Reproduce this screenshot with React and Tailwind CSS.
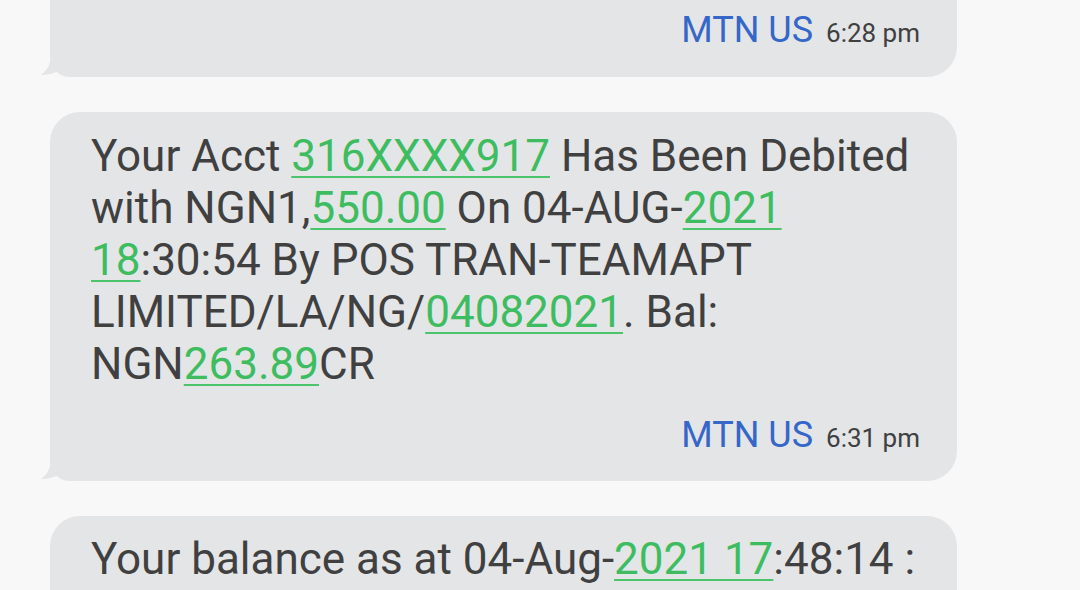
import React from 'react';

const Link = ({ children }) => (
  <span className="text-[#3dbd5f] underline decoration-[#4cc46c] decoration-2 underline-offset-[5px]">
    {children}
  </span>
);

const Tail = () => (
  <svg
    className="absolute left-[-10px] bottom-0"
    width="40"
    height="30"
    viewBox="0 0 40 30"
  >
    <path d="M11 0 L11 6 C11 16 8 23 1 28 C9 28 16 26 23 21 L23 0 Z" fill="#e4e5e7" />
  </svg>
);

const Footer = ({ time }) => (
  <div className="flex items-baseline justify-end gap-[13px] leading-[44px]">
    <span className="text-[36px] text-[#3567c9]">MTN US</span>
    <span className="text-[26px] text-[#404040]">{time}</span>
  </div>
);

const Bubble = ({ children, tail = true, className = '' }) => (
  <div className={`relative w-[907px] bg-[#e4e5e7] rounded-[30px] rounded-bl-[20px] pl-[41px] pr-[37px] ${className}`}>
    {children}
    {tail && <Tail />}
  </div>
);

export default function App() {
  const lines = [
    <>Your Acct <Link>316XXXX917</Link> Has Been Debited</>,
    <>with NGN1,<Link>550.00</Link> On 04-AUG-<Link>2021</Link></>,
    <><Link>18</Link>:30:54 By POS TRAN-TEAMAPT</>,
    <>LIMITED/LA/NG/<Link>04082021</Link>. Bal:</>,
    <>NGN<Link>263.89</Link>CR</>,
  ];

  return (
    <div
      className="w-[1080px] h-[590px] overflow-hidden bg-[#f8f8f8]"
      style={{ fontFamily: 'Roboto, "Noto Sans", sans-serif' }}
    >
      <div className="-mt-[100px] pl-[50px] flex flex-col gap-[35px]">
        <Bubble className="pt-[108px] pb-[22px]">
          <Footer time="6:28 pm" />
        </Bubble>

        <Bubble className="pt-[18px] pb-[21px]">
          <div className="text-[44px] leading-[52px] text-[#404040]">
            {lines.map((l, i) => (
              <div key={i} className="whitespace-nowrap">{l}</div>
            ))}
          </div>
          <div className="mt-[23px]">
            <Footer time="6:31 pm" />
          </div>
        </Bubble>

        <Bubble tail={false} className="pt-[17px] pb-[40px]">
          <div className="text-[44px] leading-[52px] text-[#404040] whitespace-nowrap">
            Your balance as at 04-Aug-<Link>2021 17</Link>:48:14 :
          </div>
        </Bubble>
      </div>
    </div>
  );
}
